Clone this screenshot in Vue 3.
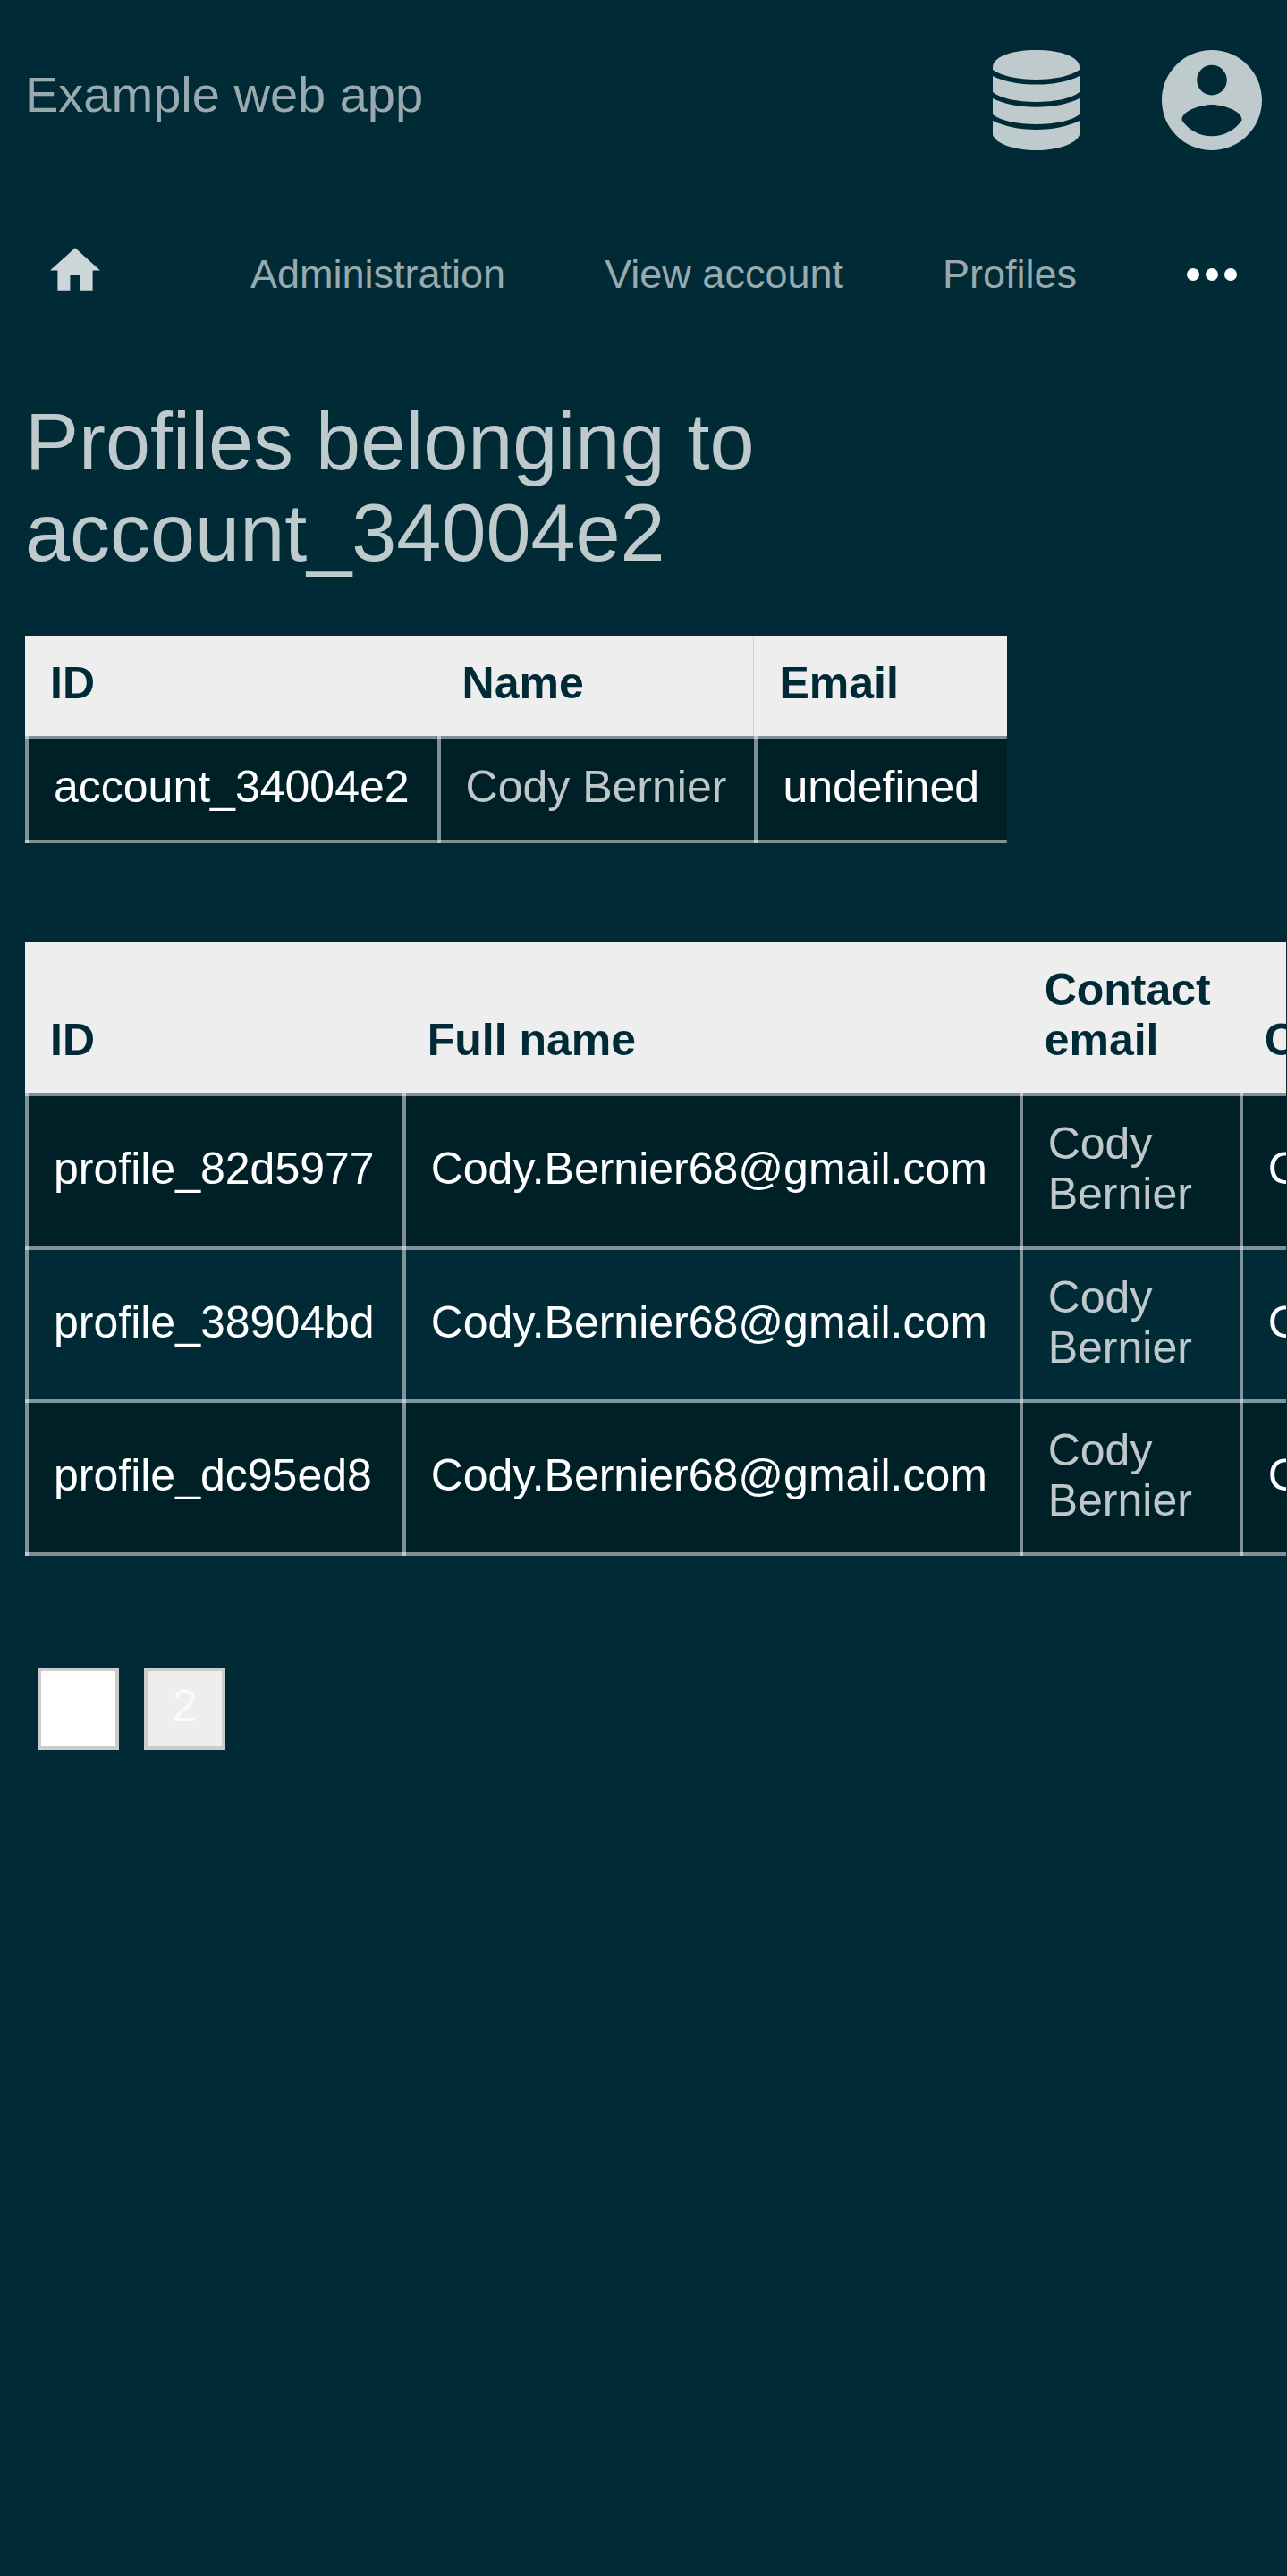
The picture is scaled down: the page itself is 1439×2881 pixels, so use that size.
<script setup>
const navLinks = ['Administration', 'View account', 'Profiles']

const account = { id: 'account_34004e2', name: 'Cody Bernier', email: 'undefined' }

const profiles = [
  { id: 'profile_82d5977', fullName: 'Cody.Bernier68@gmail.com', contact: 'Cody Bernier', extra: 'C' },
  { id: 'profile_38904bd', fullName: 'Cody.Bernier68@gmail.com', contact: 'Cody Bernier', extra: 'C' },
  { id: 'profile_dc95ed8', fullName: 'Cody.Bernier68@gmail.com', contact: 'Cody Bernier', extra: 'C' },
]
</script>

<template>
  <div class="page">
    <header class="header">
      <a class="brand" href="#">Example web app</a>
      <div class="actions">
        <a class="action" href="#" aria-label="Database">
          <svg width="97" height="112" viewBox="0 0 97 112" aria-hidden="true">
            <path d="M0 19C0 8 20 0 48.500 0S97 8 97 19V22C87 29 69 33 48.500 33S10 29 0 22Z" />
            <path d="M0 29C12 35 29 38.600 48.500 38.600S85 35 97 29V47C88 54 70 58 48.500 58S9 54 0 47Z" />
            <path d="M0 54C12 60 29 63.800 48.500 63.800S85 60 97 54V72C88 79 70 83 48.500 83S9 79 0 72Z" />
            <path d="M0 79C12 85 29 89 48.500 89S85 85 97 79V95C93 105 73 112 48.500 112S4 105 0 95Z" />
          </svg>
        </a>
        <a class="action" href="#" aria-label="Account">
          <svg width="112" height="112" viewBox="2 2 20 20" aria-hidden="true">
            <path
              d="M12 2C6.480 2 2 6.480 2 12s4.480 10 10 10 10-4.480 10-10S17.520 2 12 2zm0 3c1.660 0 3 1.340 3 3s-1.340 3-3 3-3-1.340-3-3 1.340-3 3-3zm0 14.200c-2.500 0-4.710-1.280-6-3.220.03-1.990 4-3.080 6-3.080 1.990 0 5.970 1.090 6 3.080-1.290 1.940-3.500 3.220-6 3.220z"
            />
          </svg>
        </a>
      </div>
    </header>

    <nav class="nav">
      <a class="home" href="#" aria-label="Home">
        <svg width="56" height="48" viewBox="2 3 20 17" aria-hidden="true">
          <path d="M10 20v-6h4v6h5v-8h3L12 3 2 12h3v8z" />
        </svg>
      </a>
      <div class="links">
        <a v-for="link in navLinks" :key="link" class="link" href="#">{{ link }}</a>
      </div>
      <button class="more" type="button" aria-label="More">
        <svg width="56" height="14" viewBox="0 0 56 14" aria-hidden="true">
          <circle cx="7" cy="7" r="7" />
          <circle cx="28" cy="7" r="7" />
          <circle cx="49" cy="7" r="7" />
        </svg>
      </button>
    </nav>

    <main class="content">
      <h1 class="title">Profiles belonging to<br />account_34004e2</h1>

      <div class="table-wrap">
        <table class="table">
          <thead>
            <tr>
              <th scope="col">ID</th>
              <th scope="col" class="ruled">Name</th>
              <th scope="col">Email</th>
            </tr>
          </thead>
          <tbody>
            <tr>
              <td>{{ account.id }}</td>
              <td><a class="cell-link" href="#">{{ account.name }}</a></td>
              <td>{{ account.email }}</td>
            </tr>
          </tbody>
        </table>
      </div>

      <div class="table-wrap">
        <table class="table">
          <thead>
            <tr>
              <th scope="col" class="ruled">ID</th>
              <th scope="col" class="full-name">Full name</th>
              <th scope="col">Contact email</th>
              <th scope="col">C</th>
            </tr>
          </thead>
          <tbody>
            <tr v-for="profile in profiles" :key="profile.id">
              <td>{{ profile.id }}</td>
              <td>{{ profile.fullName }}</td>
              <td><a class="cell-link" href="#">{{ profile.contact }}</a></td>
              <td>{{ profile.extra }}</td>
            </tr>
          </tbody>
        </table>
      </div>

      <div class="pagination">
        <button class="page-button current" type="button" aria-current="page">1</button>
        <button class="page-button" type="button">2</button>
      </div>
    </main>
  </div>
</template>

<style>
body {
  background: #002b36;
}
</style>

<style scoped>
.page {
  --line: rgba(255, 255, 255, 0.5);
  min-height: 100vh;
  box-sizing: border-box;
  overflow: hidden;
  background: #002b36;
  color: #fff;
  font-family: "Liberation Sans", Arial, sans-serif;
  font-size: 50px;
  line-height: 56px;
}

a {
  text-decoration: none;
}

svg {
  display: block;
  fill: currentColor;
}

.header {
  display: flex;
  align-items: center;
  justify-content: space-between;
  padding: 56px 28px;
}

.brand {
  padding-bottom: 12px;
  color: #99aaaf;
  font-size: 56px;
  line-height: 64px;
}

.actions {
  display: flex;
  gap: 92px;
}

.action {
  color: #bfcacd;
}

.nav {
  display: flex;
  align-items: center;
  height: 154px;
  padding: 6px 56px 0;
}

.home {
  padding-bottom: 12px;
  color: #ccd5d7;
}

.links {
  display: flex;
  flex: 1;
  gap: 111px;
  padding-left: 168px;
}

.link {
  color: #99aaaf;
  font-size: 45px;
  line-height: 52px;
  white-space: nowrap;
}

.more {
  padding: 0;
  border: 0;
  background: none;
  color: #fff;
}

.content {
  padding: 59px 0 56px 28px;
}

.title {
  margin: 0 0 64px;
  color: #bfcacd;
  font-size: 90px;
  font-weight: 400;
  line-height: 102px;
}

.table-wrap {
  overflow: hidden;
  margin: 0 1px 111px 0;
}

.table {
  border-spacing: 0;
}

.table th {
  padding: 25px 32px 31px 28px;
  background: #eee;
  color: #002b36;
  font-weight: 700;
  text-align: left;
  vertical-align: bottom;
}

.table th.ruled {
  background: linear-gradient(#d0d3d4, #d0d3d4) right / 1px 100% no-repeat #eee;
}

.table th.full-name {
  min-width: 630px;
}

.table td {
  --fill: #002b36;
  padding: 25px 31px 34px 32px;
  background:
    linear-gradient(var(--line), var(--line)) left / 4px 100% no-repeat,
    linear-gradient(var(--line), var(--line)) bottom / 100% 4px no-repeat,
    var(--fill);
  vertical-align: middle;
}

.table tr:nth-child(odd) td {
  --fill: #002028;
}

.table tr:first-child td {
  padding-top: 29px;
  padding-bottom: 35px;
  background:
    linear-gradient(var(--line), var(--line)) left / 4px 100% no-repeat,
    linear-gradient(var(--line), var(--line)) bottom / 100% 4px no-repeat,
    linear-gradient(var(--line), var(--line)) top / 100% 4px no-repeat,
    var(--fill);
}

.cell-link {
  color: rgba(255, 255, 255, 0.75);
}

.pagination {
  display: flex;
  gap: 28px;
  padding: 14px;
}

.page-button {
  width: 91px;
  height: 92px;
  padding: 0 0 6px;
  border: 4px solid #ccc;
  background: #eee;
  color: #fafafa;
  font: inherit;
}

.page-button.current {
  background: #fff;
  color: #fff;
}
</style>
